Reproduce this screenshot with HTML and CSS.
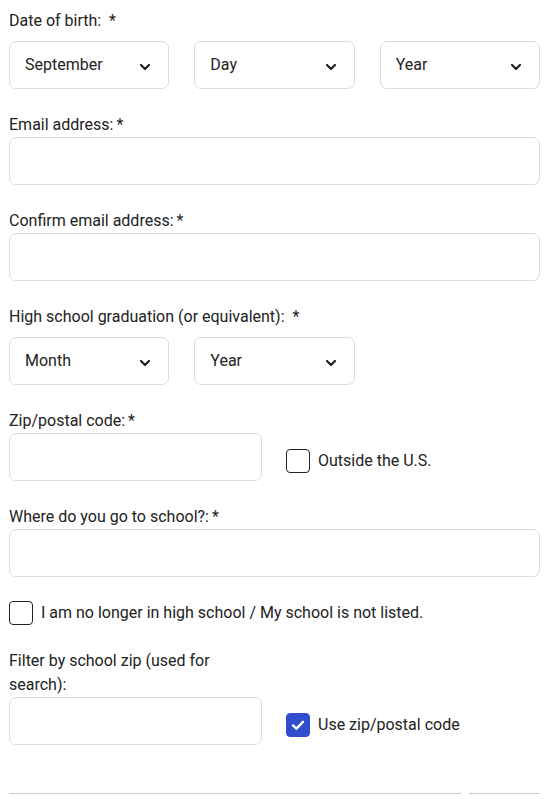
FILE: index.html
```html
<!DOCTYPE html>
<html>
<head>
<meta charset="utf-8">
<link rel="stylesheet" href="styles.css">
</head>
<body>
<form class="form">
  <div class="field">
    <div class="label spaced">Date of birth:&nbsp; *</div>
    <div class="grid3">
      <div class="select"><span>September</span><svg class="chev" viewBox="0 0 10 6"><path d="M1 1 L5 5 L9 1" /></svg></div>
      <div class="select"><span>Day</span><svg class="chev" viewBox="0 0 10 6"><path d="M1 1 L5 5 L9 1" /></svg></div>
      <div class="select"><span>Year</span><svg class="chev" viewBox="0 0 10 6"><path d="M1 1 L5 5 L9 1" /></svg></div>
    </div>
  </div>

  <div class="field">
    <div class="label">Email address:<span class="req">*</span></div>
    <div class="input"></div>
  </div>

  <div class="field">
    <div class="label">Confirm email address:<span class="req">*</span></div>
    <div class="input"></div>
  </div>

  <div class="field">
    <div class="label spaced">High school graduation (or equivalent):&nbsp; *</div>
    <div class="grid3">
      <div class="select"><span>Month</span><svg class="chev" viewBox="0 0 10 6"><path d="M1 1 L5 5 L9 1" /></svg></div>
      <div class="select"><span>Year</span><svg class="chev" viewBox="0 0 10 6"><path d="M1 1 L5 5 L9 1" /></svg></div>
    </div>
  </div>

  <div class="field grid2">
    <div>
      <div class="label">Zip/postal code:<span class="req">*</span></div>
      <div class="input"></div>
    </div>
    <label class="check aside"><span class="box"></span><span>Outside the U.S.</span></label>
  </div>

  <div class="field">
    <div class="label">Where do you go to school?:<span class="req">*</span></div>
    <div class="input"></div>
  </div>

  <div class="field">
    <label class="check"><span class="box"></span><span>I am no longer in high school / My school is not listed.</span></label>
  </div>

  <div class="field grid2">
    <div>
      <div class="label">Filter by school zip (used for search):</div>
      <div class="input"></div>
    </div>
    <label class="check aside"><span class="box checked"><svg viewBox="0 0 24 24"><path d="M6.5 12.5 L10.3 16 L17.5 8.5" /></svg></span><span>Use zip/postal code</span></label>
  </div>

  <div class="rule"><span class="seg long"></span><span class="seg short"></span></div>
</form>
</body>
</html>
```

FILE: styles.css
```css
html, body {
  margin: 0;
  padding: 0;
  background: #ffffff;
}
body {
  font-family: Roboto, "Liberation Sans", Arial, sans-serif;
  font-size: 16px;
  line-height: 24px;
  color: #222222;
}
.form {
  width: 531px;
  padding: 9px 0 0 9px;
  display: flex;
  flex-direction: column;
  gap: 24px;
}
.label {
  line-height: 24px;
}
.req {
  margin-left: 3px;
}
.label.spaced {
  margin-bottom: 8px;
}
.grid3 {
  display: grid;
  grid-template-columns: repeat(3, 1fr);
  column-gap: 25px;
}
.grid2 {
  display: grid;
  grid-template-columns: 253px 1fr;
  column-gap: 24px;
  align-items: end;
}
.select {
  box-sizing: border-box;
  height: 48px;
  border: 1px solid #dcdcdc;
  border-radius: 7px;
  display: flex;
  align-items: center;
  justify-content: space-between;
  padding: 0 18px 0 15px;
}
.chev {
  width: 10px;
  height: 6px;
  margin-top: 3px;
}
.chev path {
  fill: none;
  stroke: #222;
  stroke-width: 2.2;
  stroke-linecap: round;
  stroke-linejoin: round;
}
.input {
  box-sizing: border-box;
  height: 48px;
  border: 1px solid #dcdcdc;
  border-radius: 7px;
}
.check {
  display: flex;
  align-items: center;
  gap: 8px;
  height: 24px;
}
.check.aside {
  margin-bottom: 8px;
}
.box {
  box-sizing: border-box;
  width: 24px;
  height: 24px;
  border: 1.5px solid #222;
  border-radius: 4px;
  flex: none;
  display: flex;
  align-items: center;
  justify-content: center;
}
.box.checked {
  background: #2f4dcc;
  border-color: #2f4dcc;
}
.box svg {
  width: 24px;
  height: 24px;
}
.box svg path {
  fill: none;
  stroke: #ffffff;
  stroke-width: 2.6;
  stroke-linecap: round;
  stroke-linejoin: round;
}
.rule {
  display: flex;
  gap: 8px;
  margin-top: 24px;
}
.seg {
  height: 1px;
  background: #cccccc;
}
.seg.long {
  width: 452px;
}
.seg.short {
  flex: 1;
}
```
